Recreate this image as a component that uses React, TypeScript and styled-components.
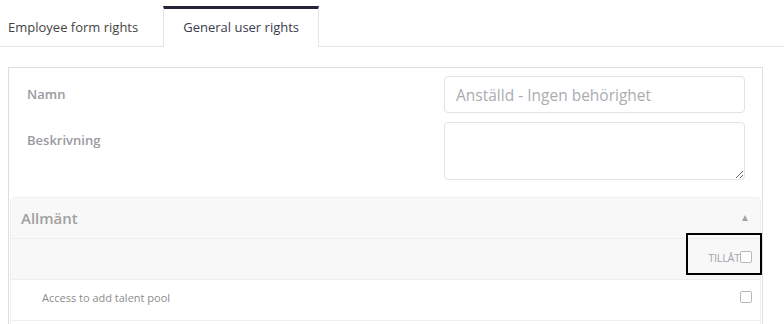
import { createGlobalStyle, styled } from "styled-components";

const GlobalStyle = createGlobalStyle`
  body {
    margin: 0;
    background: #ffffff;
    font-family: "Open Sans", "Noto Sans", sans-serif;
  }
`;

const tabs = [
  { text: "Employee form rights", isActive: false },
  { text: "General user rights", isActive: true },
];

const App = () => {
  return (
    <Page>
      <GlobalStyle />
      <TabBar>
        {tabs.map((tab) => (
          <Tab key={tab.text} isActive={tab.isActive}>
            {tab.text}
          </Tab>
        ))}
      </TabBar>

      <Panel>
        <FormRow>
          <Label>Namn</Label>
          <Input placeholder="Anställd - Ingen behörighet" />
        </FormRow>
        <FormRow>
          <Label>Beskrivning</Label>
          <TextArea />
        </FormRow>

        <Section>
          <SectionHeader>
            <SectionTitle>Allmänt</SectionTitle>
            <Caret />
          </SectionHeader>
          <ColumnRow>
            <ColumnTitle>TILLÅT</ColumnTitle>
            <Check />
            <Highlight />
          </ColumnRow>
          <RightRow>
            <RightText>Access to add talent pool</RightText>
            <Check />
          </RightRow>
          <RightRow />
        </Section>
      </Panel>
    </Page>
  );
};

export default App;

const Page = styled.div`
  width: 784px;
  height: 324px;
  overflow: hidden;
`;

const TabBar = styled.div`
  display: flex;
  align-items: flex-end;
  height: 47px;
  border-bottom: 1px solid #e4e4e4;
  box-sizing: border-box;
`;

const Tab = styled.div<{ isActive: boolean }>`
  box-sizing: border-box;
  height: ${(props) => (props.isActive ? "41px" : "38px")};
  margin-bottom: ${(props) => (props.isActive ? "-1px" : "0")};
  padding: ${(props) => (props.isActive ? "9px 19px 0 19px" : "10px 25px 0 8px")};
  font-size: 13px;
  color: ${(props) => (props.isActive ? "#3b3a4e" : "#444")};
  background: #fff;
  ${(props) =>
    props.isActive &&
    `
    border-top: 3px solid #25233a;
    border-left: 1px solid #e4e4e4;
    border-right: 1px solid #e4e4e4;
  `}
`;

const Panel = styled.div`
  margin: 20px 0 0 8px;
  width: 755px;
  height: 400px;
  box-sizing: border-box;
  border: 1px solid #dedede;
  padding: 8px 1px 0 1px;
`;

const FormRow = styled.div`
  display: flex;
  justify-content: space-between;
  align-items: flex-start;
  padding: 0 16px 0 17px;
  margin-bottom: 9px;
`;

const Label = styled.div`
  font-size: 13px;
  font-weight: 600;
  color: #9a9a9f;
  line-height: 36px;
`;

const Input = styled.input`
  box-sizing: border-box;
  width: 301px;
  height: 37px;
  border: 1px solid #e2e2e2;
  border-radius: 4px;
  padding: 0 11px;
  font-family: "Open Sans", "Noto Sans", sans-serif;
  font-size: 15.5px;
  outline: none;
  &::placeholder {
    color: #acacb0;
  }
`;

const TextArea = styled.textarea`
  box-sizing: border-box;
  width: 301px;
  height: 58px;
  border: 1px solid #e2e2e2;
  border-radius: 4px;
  margin: 0 0 8px 0;
  display: block;
  outline: none;
`;

const Section = styled.div`
  border: 1px solid #efefef;
  border-radius: 4px;
`;

const SectionHeader = styled.div`
  display: flex;
  justify-content: space-between;
  align-items: center;
  height: 40px;
  padding: 0 12px 0 10px;
  background: #f8f8f8;
`;

const SectionTitle = styled.div`
  font-size: 15px;
  font-weight: 600;
  color: #a0a0a0;
`;

const Caret = styled.div`
  width: 0;
  height: 0;
  border-left: 3.5px solid transparent;
  border-right: 3.5px solid transparent;
  border-bottom: 6px solid #a4a4a4;
`;

const ColumnRow = styled.div`
  position: relative;
  display: flex;
  justify-content: flex-end;
  align-items: center;
  height: 41px;
  padding: 0 8px 4px 0;
  background: #f8f8f8;
  border-top: 1px solid #eeeeee;
  box-sizing: border-box;
`;

const ColumnTitle = styled.div`
  font-size: 11px;
  color: #a4a4ae;
  letter-spacing: -0.3px;
`;

const Check = styled.div`
  box-sizing: border-box;
  width: 12px;
  height: 12px;
  border: 1px solid #b8b8b8;
  border-radius: 2px;
  background: #fff;
`;

const Highlight = styled.div`
  position: absolute;
  top: -6px;
  right: -2px;
  width: 76px;
  height: 42px;
  box-sizing: border-box;
  border: 2px solid #000;
`;

const RightRow = styled.div`
  display: flex;
  justify-content: space-between;
  align-items: center;
  height: 41px;
  padding: 0 8px 6px 31px;
  border-top: 1px solid #eeeeee;
  box-sizing: border-box;
`;

const RightText = styled.div`
  font-size: 11px;
  color: #8c8c8c;
`;
